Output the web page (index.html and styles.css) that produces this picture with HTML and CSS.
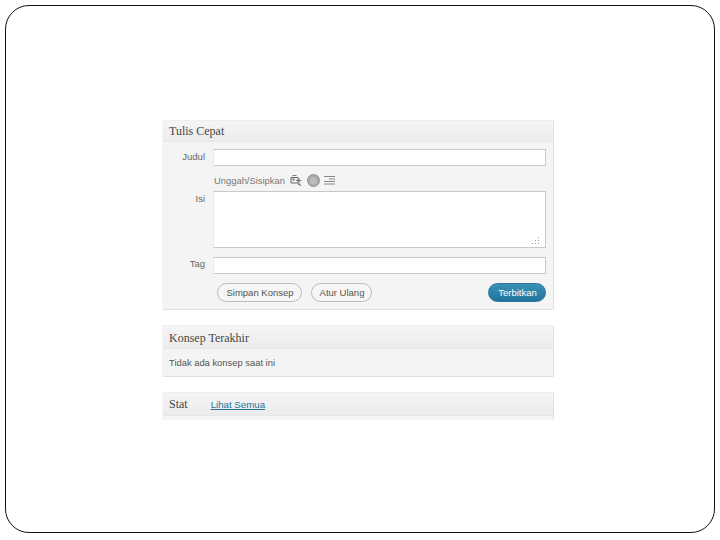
FILE: index.html
```html
<!DOCTYPE html>
<html>

<head>
    <title>Tulis Cepat</title>
    <link rel="stylesheet" href="styles.css">
</head>

<body>
    <div class="slide">
        <div class="panel panel-quick">
            <h3 class="panel-title">Tulis Cepat</h3>
            <div class="panel-body quick-form">
                <div class="form-row row-title">
                    <label class="form-label" for="title">Judul</label>
                    <div class="text-field" id="title"></div>
                </div>
                <div class="upload-row">
                    <span>Unggah/Sisipkan</span>
                    <svg class="icon" width="12" height="12" viewBox="0 0 12 12">
                        <path d="M1 3.5h7v5.5h-7z" fill="none" stroke="#666" />
                        <path d="M2.5 1.5h4M6 6.5h5.5M9 4v6" stroke="#777" fill="none" />
                        <circle cx="3.5" cy="5.5" r="1.3" fill="#888" />
                        <path d="M8 10l3 1.5" stroke="#555" />
                    </svg>
                    <svg class="icon icon-round" width="13" height="13" viewBox="0 0 13 13">
                        <circle cx="6.5" cy="6.5" r="6" fill="#aaa" stroke="#949494" />
                        <circle cx="6.5" cy="7" r="3.5" fill="#bcbcbc" />
                    </svg>
                    <svg class="icon icon-lines" width="11" height="11" viewBox="0 0 11 11">
                        <path d="M0 1.5h11M5 4h6M0 6.5h11M0 9h11" stroke="#888" fill="none" />
                    </svg>
                </div>
                <div class="form-row row-body">
                    <label class="form-label" for="content">Isi</label>
                    <div class="text-field text-area" id="content">
                        <svg class="grip" width="9" height="9" viewBox="0 0 9 9">
                            <path d="M0 7h1v1H0zM3 7h1v1H3zM6 7h1v1H6zM3 4h1v1H3zM6 4h1v1H6zM6 1h1v1H6z" fill="#999" />
                        </svg>
                    </div>
                </div>
                <div class="form-row row-tag">
                    <label class="form-label" for="tag">Tag</label>
                    <div class="text-field" id="tag"></div>
                </div>
                <div class="actions">
                    <span class="btn btn-save">Simpan Konsep</span>
                    <span class="btn btn-reset">Atur Ulang</span>
                    <span class="btn btn-publish">Terbitkan</span>
                </div>
            </div>
        </div>

        <div class="panel panel-drafts">
            <h3 class="panel-title">Konsep Terakhir</h3>
            <div class="panel-body drafts-body">Tidak ada konsep saat ini</div>
        </div>

        <div class="panel panel-stats">
            <h3 class="panel-title">Stat <a class="view-all" href="#">Lihat Semua</a></h3>
            <div class="panel-body stats-body"></div>
        </div>
    </div>
</body>

</html>
```

FILE: styles.css
```css
html,
body {
    margin: 0;
    padding: 0;
    background-color: #ffffff;
}

body {
    width: 720px;
    height: 540px;
    overflow: hidden;
    font-family: "Liberation Sans", Arial, sans-serif;
    color: #555;
}

.slide {
    box-sizing: border-box;
    width: 710px;
    height: 528px;
    margin: 5px 0 0 5px;
    padding: 114px 0 0 156px;
    border: 1px solid #111;
    border-radius: 24px;
    display: flex;
    flex-direction: column;
}

.panel {
    box-sizing: border-box;
    width: 392px;
    background-color: #f4f4f4;
    border: 1px solid #e0e0e0;
    border-top-color: #eeeeee;
    border-left-color: #f4f4f4;
    border-radius: 2px;
    flex-shrink: 0;
}

.panel-title {
    box-sizing: border-box;
    margin: 0;
    padding: 0 6px;
    height: 21px;
    line-height: 20px;
    font-family: "Liberation Serif", "Times New Roman", serif;
    font-size: 12px;
    font-weight: normal;
    color: #464646;
    background: linear-gradient(to bottom, #f5f5f5, #ececec);
    border-bottom: 1px solid #e6e6e6;
}

.panel-quick {
    height: 190px;
}

.quick-form {
    padding: 7px 7px 0 0;
}

.form-row {
    display: flex;
}

.form-label {
    width: 42px;
    padding-right: 8px;
    text-align: right;
    font-size: 9.5px;
    color: #666;
    flex-shrink: 0;
}

.text-field {
    box-sizing: border-box;
    width: 333px;
    height: 17px;
    background-color: #ffffff;
    border: 1px solid #c8c8c8;
    border-left-color: #e8e8e8;
}

.row-title .form-label {
    line-height: 15px;
}

.upload-row {
    box-sizing: border-box;
    display: flex;
    align-items: center;
    height: 25px;
    padding: 3px 0 0 51px;
    font-size: 9.4px;
    color: #777;
}

.icon {
    margin-left: 5px;
}

.icon-round {
    margin-left: 5px;
}

.icon-lines {
    margin-left: 4px;
}

.row-body {
    margin-bottom: 9px;
}

.row-body .form-label {
    line-height: 15px;
}

.text-area {
    position: relative;
    height: 57px;
}

.grip {
    position: absolute;
    right: 4px;
    bottom: 2px;
}

.row-tag .form-label {
    line-height: 14px;
}

.actions {
    display: flex;
    margin-top: 9px;
    padding-left: 54px;
}

.btn {
    box-sizing: border-box;
    height: 19px;
    line-height: 17px;
    padding-left: 1px;
    border-radius: 10px;
    border: 1px solid #bbb;
    background-color: #f6f6f6;
    font-size: 9.5px;
    color: #555;
    text-align: center;
}

.btn-save {
    width: 85px;
}

.btn-reset {
    width: 61px;
    margin-left: 9px;
}

.btn-publish {
    width: 58px;
    margin-left: auto;
    border-color: #27779f;
    background: linear-gradient(to bottom, #3a8fb8, #21759b);
    color: #ffffff;
}

.panel-drafts {
    height: 52px;
    margin-top: 15px;
}

.panel-drafts .panel-title {
    height: 23px;
    line-height: 24px;
}

.drafts-body {
    padding: 8px 6px 0;
    font-size: 9.4px;
    color: #555;
}

.panel-stats {
    height: 28px;
    margin-top: 15px;
    border-bottom: none;
    border-radius: 2px 2px 0 0;
}

.panel-stats .panel-title {
    height: 23px;
    line-height: 23px;
}

.view-all {
    margin-left: 20px;
    font-family: "Liberation Sans", Arial, sans-serif;
    font-size: 9.7px;
    color: #21759b;
}
```
